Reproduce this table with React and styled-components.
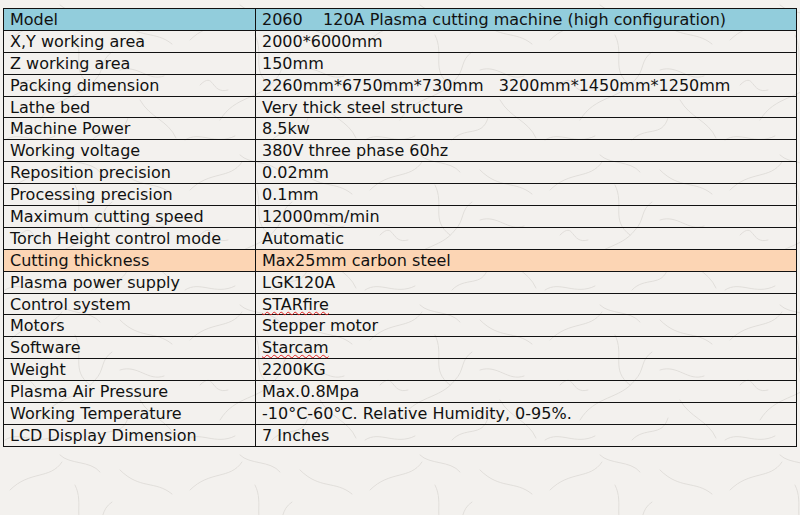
import React from "react";
import styled, { createGlobalStyle } from "styled-components";

// faint paper fibres, tiled behind the page
const fibres = encodeURIComponent(`<svg xmlns="http://www.w3.org/2000/svg" width="180" height="150" viewBox="0 0 180 150">
<g fill="none" stroke="#d9d6d1" stroke-width="0.7" stroke-linecap="round">
<path d="M10 40 C30 20 50 30 62 12"/>
<path d="M40 120 C55 95 80 100 95 80 C105 70 100 60 112 52"/>
<path d="M120 20 C140 40 155 30 172 44"/>
<path d="M140 100 C150 118 168 120 176 138"/>
<path d="M5 140 C20 130 35 146 55 136"/>
<path d="M75 35 C85 55 70 70 90 85"/>
<path d="M120 70 C138 64 148 82 164 76"/>
<path d="M92 140 C105 126 122 138 128 118"/>
<path d="M20 85 C35 70 30 95 48 90"/>
<path d="M60 5 C70 15 90 10 100 22"/>
</g></svg>`);

const GlobalStyle = createGlobalStyle`
  html, body {
    margin: 0;
    padding: 0;
  }
  body {
    width: 800px;
    height: 515px;
    overflow: hidden;
    background-color: #f3f1ee;
    background-image: url("data:image/svg+xml,${fibres}");
    font-family: "DejaVu Sans", Tahoma, Verdana, sans-serif;
    color: #111;
  }
`;

const Page = styled.div`
  padding: 8px 4px 0 3px;
`;

const SpecTable = styled.table`
  border-collapse: collapse;
  width: 794px;
  font-size: 16px;
  line-height: 18px;
`;

const Row = styled.tr`
  height: 21.9px;
  background: ${(p) => p.$bg || "transparent"};
`;

const Cell = styled.td`
  border: 1px solid #111;
  padding: 1px 6px 0 6px;
  white-space: pre;
  vertical-align: middle;
  width: ${(p) => (p.$key ? "239px" : "auto")};
`;

const Misspelt = styled.span`
  text-decoration: underline wavy #e02020;
  text-decoration-thickness: 1px;
  text-underline-offset: 1px;
`;

const specs = [
  ["Model", "2060    120A Plasma cutting machine (high configuration)", "#92cddc"],
  ["X,Y working area", "2000*6000mm"],
  ["Z working area", "150mm"],
  ["Packing dimension", "2260mm*6750mm*730mm   3200mm*1450mm*1250mm"],
  ["Lathe bed", "Very thick steel structure"],
  ["Machine Power", "8.5kw"],
  ["Working voltage", "380V three phase 60hz"],
  ["Reposition precision", "0.02mm"],
  ["Processing precision", "0.1mm"],
  ["Maximum cutting speed", "12000mm/min"],
  ["Torch Height control mode", "Automatic"],
  ["Cutting thickness", "Max25mm carbon steel", "#fcd5b4"],
  ["Plasma power supply", "LGK120A"],
  ["Control system", <Misspelt>STARfire</Misspelt>],
  ["Motors", "Stepper motor"],
  ["Software", <Misspelt>Starcam</Misspelt>],
  ["Weight", "2200KG"],
  ["Plasma Air Pressure", "Max.0.8Mpa"],
  ["Working Temperature", "-10°C-60°C. Relative Humidity, 0-95%."],
  ["LCD Display Dimension", "7 Inches"],
];

export default function App() {
  return (
    <>
      <GlobalStyle />
      <Page>
        <SpecTable>
          <tbody>
            {specs.map(([name, value, bg]) => (
              <Row key={name} $bg={bg}>
                <Cell $key>{name}</Cell>
                <Cell>{value}</Cell>
              </Row>
            ))}
          </tbody>
        </SpecTable>
      </Page>
    </>
  );
}
